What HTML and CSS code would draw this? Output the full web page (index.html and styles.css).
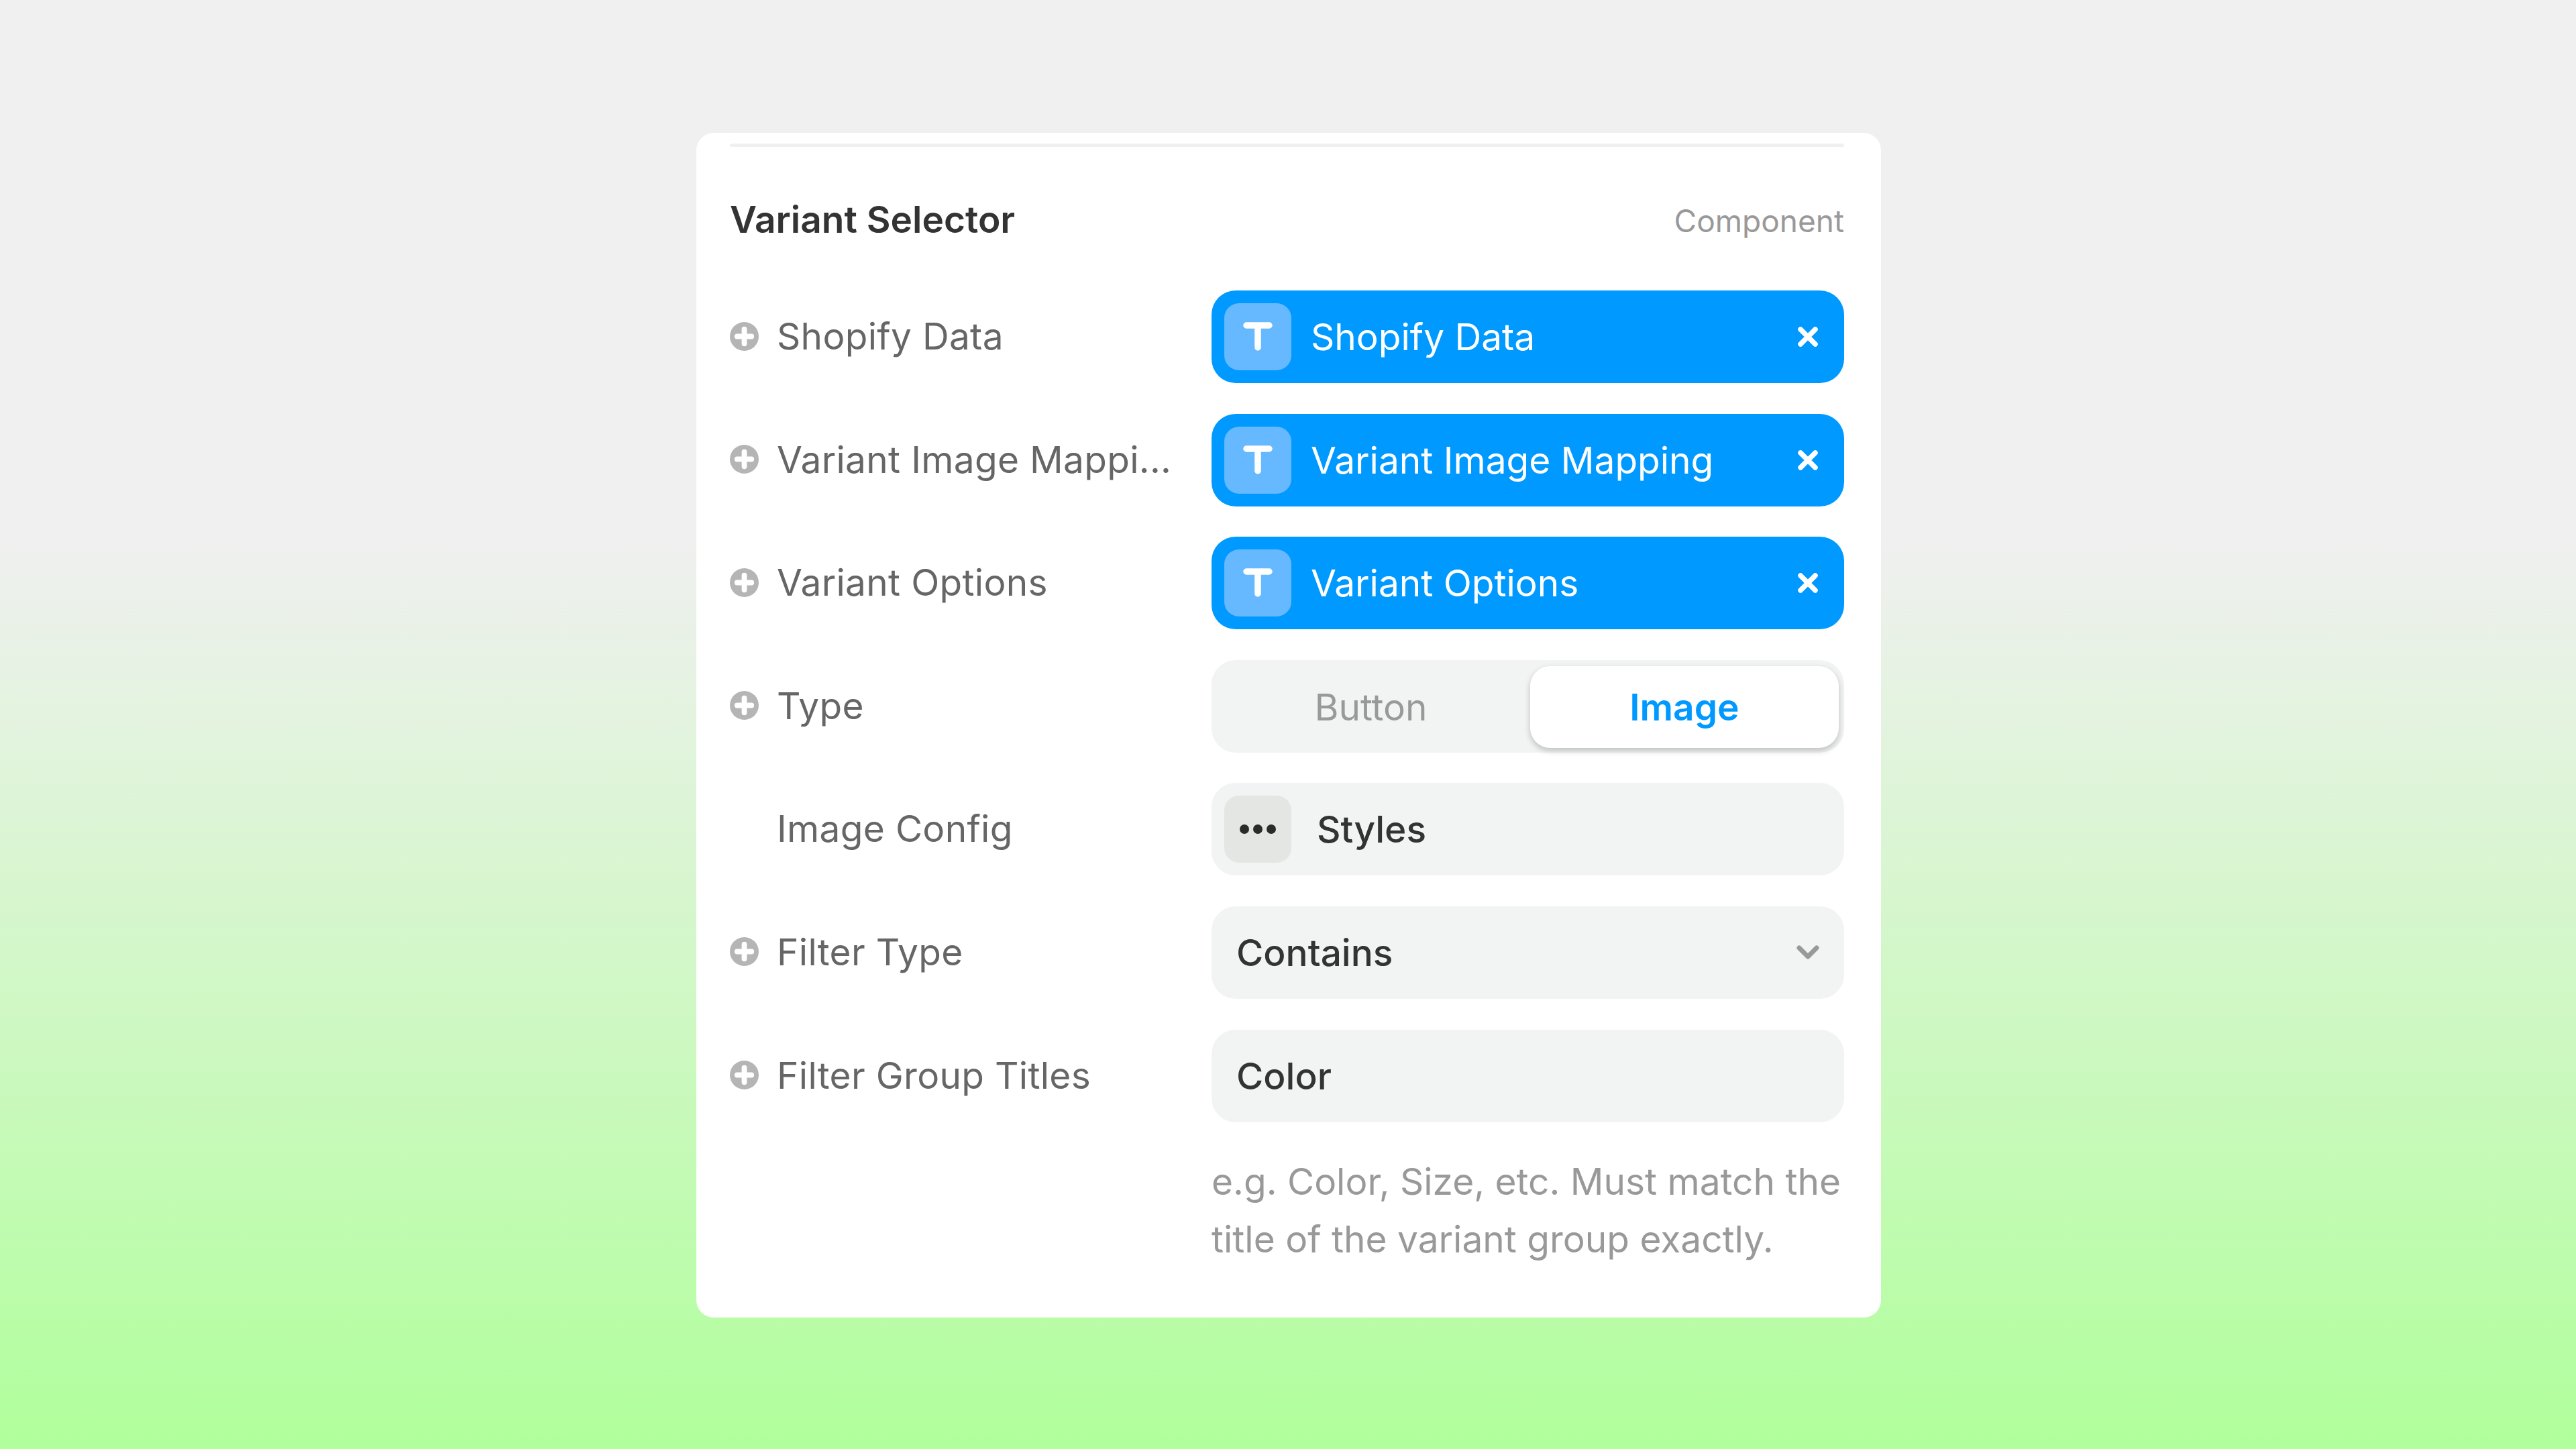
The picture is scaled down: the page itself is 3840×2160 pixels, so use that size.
FILE: index.html
```html
<!DOCTYPE html>
<html lang="en">
<head>
  <meta charset="UTF-8" />
  <title>Variant Selector</title>
  <link rel="stylesheet" href="styles.css">
</head>
<body>
  <svg class="defs" width="0" height="0">
    <symbol id="plus" viewBox="0 0 44 44">
      <circle cx="22" cy="22" r="22" fill="#b5b5b5" />
      <path d="M22 11v22M11 22h22" stroke="#fff" stroke-width="8" stroke-linecap="round" />
    </symbol>
    <symbol id="tee" viewBox="0 0 44 44">
      <path d="M5 5h34M22 5v33" stroke="#fff" stroke-width="9.5" stroke-linecap="round" fill="none" />
    </symbol>
    <symbol id="cross" viewBox="0 0 32 32">
      <path d="M5 5l22 22M27 5L5 27" stroke="#fff" stroke-width="7.5" stroke-linecap="round" fill="none" />
    </symbol>
  </svg>

  <div class="card">
    <div class="top-line"></div>

    <div class="header">
      <h2>Variant Selector</h2>
      <span class="kind">Component</span>
    </div>

    <div class="rows">
      <div class="row">
        <div class="label"><svg class="plus"><use href="#plus" /></svg><span>Shopify Data</span></div>
        <div class="field bound">
          <span class="icon-box"><svg class="tee"><use href="#tee" /></svg></span>
          <span class="bound-name">Shopify Data</span>
          <svg class="cross"><use href="#cross" /></svg>
        </div>
      </div>

      <div class="row">
        <div class="label"><svg class="plus"><use href="#plus" /></svg><span>Variant Image Mappi...</span></div>
        <div class="field bound">
          <span class="icon-box"><svg class="tee"><use href="#tee" /></svg></span>
          <span class="bound-name">Variant Image Mapping</span>
          <svg class="cross"><use href="#cross" /></svg>
        </div>
      </div>

      <div class="row">
        <div class="label"><svg class="plus"><use href="#plus" /></svg><span>Variant Options</span></div>
        <div class="field bound">
          <span class="icon-box"><svg class="tee"><use href="#tee" /></svg></span>
          <span class="bound-name">Variant Options</span>
          <svg class="cross"><use href="#cross" /></svg>
        </div>
      </div>

      <div class="row">
        <div class="label"><svg class="plus"><use href="#plus" /></svg><span>Type</span></div>
        <div class="field segmented">
          <button class="seg">Button</button>
          <button class="seg active">Image</button>
        </div>
      </div>

      <div class="row">
        <div class="label no-plus"><span>Image Config</span></div>
        <div class="field styles">
          <span class="icon-box dots"><i></i><i></i><i></i></span>
          <span class="styles-name">Styles</span>
        </div>
      </div>

      <div class="row">
        <div class="label"><svg class="plus"><use href="#plus" /></svg><span>Filter Type</span></div>
        <div class="field plain">
          <span>Contains</span>
          <svg class="chevron" viewBox="0 0 34 22"><path d="M4 4l13 13L30 4" stroke="#999" stroke-width="7" stroke-linecap="round" stroke-linejoin="round" fill="none" /></svg>
        </div>
      </div>

      <div class="row">
        <div class="label"><svg class="plus"><use href="#plus" /></svg><span>Filter Group Titles</span></div>
        <div class="field plain"><span>Color</span></div>
      </div>
    </div>

    <p class="help">e.g. Color, Size, etc. Must match the title of the variant group exactly.</p>
  </div>
</body>
</html>
```

FILE: styles.css
```css
* {
  box-sizing: border-box;
}

body {
  margin: 0;
  min-height: 100vh;
  font-family: "Inter", sans-serif;
  background: linear-gradient(180deg, #f0f0f0 0%, #f0f0f0 37%, #b0ff9b 100%);
  display: flex;
  align-items: center;
  justify-content: center;
  color: #333;
}

.defs {
  position: absolute;
}

.card {
  width: 1766px;
  height: 1766px;
  margin: 2px 0 0 2px;
  padding: 16px 55px 0 50px;
  background-color: white;
  border-radius: 26px;
}

.top-line {
  height: 5px;
  background-color: #eef1ef;
  border-radius: 3px;
}

.header {
  display: flex;
  align-items: center;
  justify-content: space-between;
  height: 214px;
  padding-top: 2px;
}

h2 {
  margin: 0;
  font-size: 55px;
  font-weight: 600;
  color: #333;
}

.kind {
  padding-top: 3px;
  font-size: 46px;
  color: #999;
}

.rows {
  display: flex;
  flex-direction: column;
  gap: 45.6px;
}

.row {
  display: flex;
  align-items: center;
  height: 138px;
}

.label {
  width: 718px;
  display: flex;
  align-items: center;
  gap: 27px;
  padding-bottom: 2px;
  font-size: 55px;
  letter-spacing: 0.3px;
  color: #666;
}

.label.no-plus {
  padding-left: 70px;
}

.plus {
  width: 43px;
  height: 43px;
  flex-shrink: 0;
}

.field {
  width: 943px;
  height: 138px;
  border-radius: 36px;
  background-color: #f2f4f3;
  display: flex;
  align-items: center;
  font-size: 55px;
}

.icon-box {
  width: 100px;
  height: 100px;
  margin-left: 19px;
  border-radius: 22px;
  display: flex;
  align-items: center;
  justify-content: center;
  flex-shrink: 0;
}

.bound {
  background-color: #0099ff;
  color: white;
}

.bound .icon-box {
  background-color: #66b8ff;
}

.tee {
  width: 44px;
  height: 44px;
}

.bound-name {
  flex: 1;
  margin-left: 29px;
}

.cross {
  width: 32px;
  height: 32px;
  margin-right: 38px;
}

.segmented {
  padding: 9px 8px 7px 0;
}

.seg {
  flex: 1;
  height: 122px;
  border: none;
  border-radius: 30px;
  background: none;
  font-family: inherit;
  font-size: 55px;
  color: #999;
}

.seg.active {
  flex: none;
  width: 460px;
  background-color: white;
  color: #0099ff;
  font-weight: 600;
  box-shadow: 0 4px 10px rgba(0, 0, 0, 0.22);
}

.dots {
  background-color: #e4e6e4;
  gap: 6px;
}

.dots i {
  width: 14px;
  height: 14px;
  border-radius: 50%;
  background-color: #2b2b2b;
}

.styles-name {
  margin-left: 38px;
  font-weight: 500;
}

.plain {
  padding: 0 37px;
  justify-content: space-between;
  font-weight: 500;
}

.chevron {
  width: 34px;
  height: 22px;
}

.help {
  width: 943px;
  margin: 45px 0 0 718px;
  font-size: 55px;
  line-height: 86px;
  color: #999;
}
```
